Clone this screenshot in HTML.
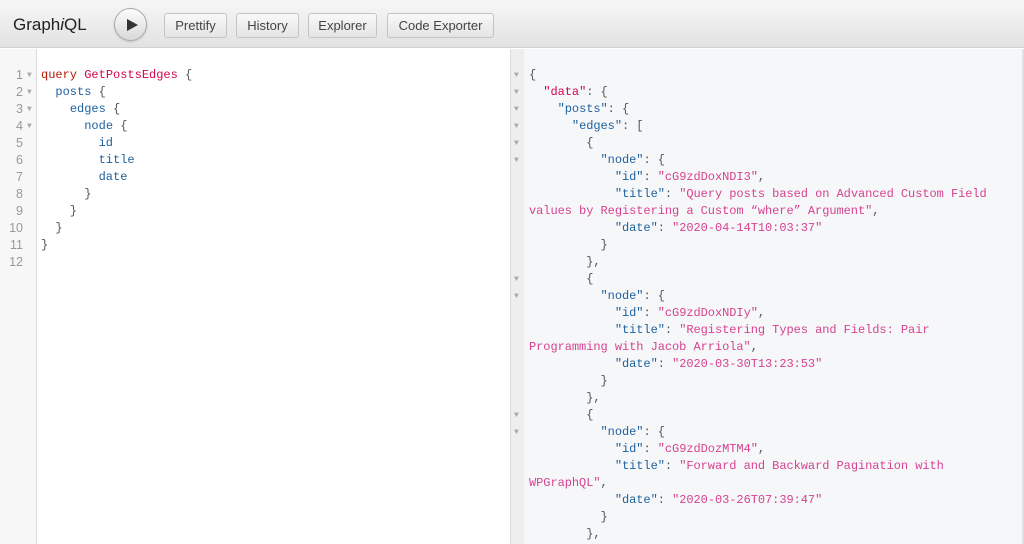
<!DOCTYPE html>
<html><head><meta charset="utf-8"><style>
*{margin:0;padding:0;box-sizing:border-box}
body{width:1024px;height:544px;overflow:hidden;font-family:"Liberation Sans",sans-serif;background:#fff;position:relative}
.top{position:absolute;left:0;top:0;width:1024px;height:48px;background:linear-gradient(#f7f7f7,#e2e2e2);border-bottom:1px solid #d0d0d0}
.top:before{content:"";position:absolute;left:0;top:0;right:0;height:3px;background:#f5f5f5}
.title{position:absolute;left:13px;top:15px;font-size:17px;color:#222}
.run{position:absolute;left:114px;top:8px;width:33px;height:33px;border-radius:50%;border:1px solid #aaa;background:linear-gradient(#fdfdfd,#d8d8d8);box-shadow:0 1px 2px rgba(0,0,0,.15)}
.run:after{content:"";position:absolute;left:12px;top:10px;border-left:11px solid #333;border-top:6px solid transparent;border-bottom:6px solid transparent}
.btn{position:absolute;top:13px;height:25px;border:1px solid #c4c4c4;border-radius:3px;background:linear-gradient(#f9f9f9,#e4e4e4);font-size:13px;color:#444;text-align:center;line-height:23px}
.gut{position:absolute;left:0;top:49px;width:37px;height:495px;background:#f7f7f7;border-right:1px solid #ddd}
.ed{position:absolute;left:37px;top:49px;width:474px;height:495px;background:#fff}
.div{position:absolute;left:510px;top:49px;width:14px;height:495px;background:#eeeeee;border-left:1px solid #ddd}
.res{position:absolute;left:524px;top:49px;width:498px;height:495px;background:#f6f7f8}
.rb{position:absolute;left:1022px;top:49px;width:2px;height:495px;background:#e0e0e0}
pre{position:absolute;font-family:"Liberation Mono",monospace;font-size:12px;line-height:17px;color:#555}
.ln{left:0;top:67px;width:23px;text-align:right;color:#999;font-family:"Liberation Sans",sans-serif;font-size:12.5px}
.fm{color:#aaa;font-size:8px}
.k{color:#b11a04}.d{color:#d2054e}.p{color:#1f61a0}.s{color:#d64292}
</style></head><body>
<div class="top">
<div class="title">Graph<i>i</i>QL</div>
<div class="run"></div>
<div class="btn" style="left:164px;width:63px">Prettify</div>
<div class="btn" style="left:236px;width:63px">History</div>
<div class="btn" style="left:308px;width:69px">Explorer</div>
<div class="btn" style="left:387px;width:107px">Code Exporter</div>
</div>
<div class="gut"></div><div class="ed"></div><div class="div"></div><div class="res"></div><div class="rb"></div>
<pre class="ln">1
2
3
4
5
6
7
8
9
10
11
12</pre>
<pre class="fm" style="left:27px;top:67px">▼
▼
▼
▼</pre>
<pre style="left:41px;top:67px"><span class="k">query</span> <span class="d">GetPostsEdges</span> {
  <span class="p">posts</span> {
    <span class="p">edges</span> {
      <span class="p">node</span> {
        <span class="p">id</span>
        <span class="p">title</span>
        <span class="p">date</span>
      }
    }
  }
}</pre>
<pre class="fm" style="left:514px;top:67px;line-height:17px;font-size:8px">▼
▼
▼
▼
▼
▼
 
 
 
 
 
 
▼
▼
 
 
 
 
 
 
▼
▼</pre>
<pre style="left:529px;top:67px;letter-spacing:-0.05px">{
  <span class="d">"data"</span>: {
    <span class="p">"posts"</span>: {
      <span class="p">"edges"</span>: [
        {
          <span class="p">"node"</span>: {
            <span class="p">"id"</span>: <span class="s">"cG9zdDoxNDI3"</span>,
            <span class="p">"title"</span>: <span class="s">"Query posts based on Advanced Custom Field</span>
<span class="s">values by Registering a Custom “where” Argument"</span>,
            <span class="p">"date"</span>: <span class="s">"2020-04-14T10:03:37"</span>
          }
        },
        {
          <span class="p">"node"</span>: {
            <span class="p">"id"</span>: <span class="s">"cG9zdDoxNDIy"</span>,
            <span class="p">"title"</span>: <span class="s">"Registering Types and Fields: Pair</span>
<span class="s">Programming with Jacob Arriola"</span>,
            <span class="p">"date"</span>: <span class="s">"2020-03-30T13:23:53"</span>
          }
        },
        {
          <span class="p">"node"</span>: {
            <span class="p">"id"</span>: <span class="s">"cG9zdDozMTM4"</span>,
            <span class="p">"title"</span>: <span class="s">"Forward and Backward Pagination with</span>
<span class="s">WPGraphQL"</span>,
            <span class="p">"date"</span>: <span class="s">"2020-03-26T07:39:47"</span>
          }
        },</pre>
</body></html>
